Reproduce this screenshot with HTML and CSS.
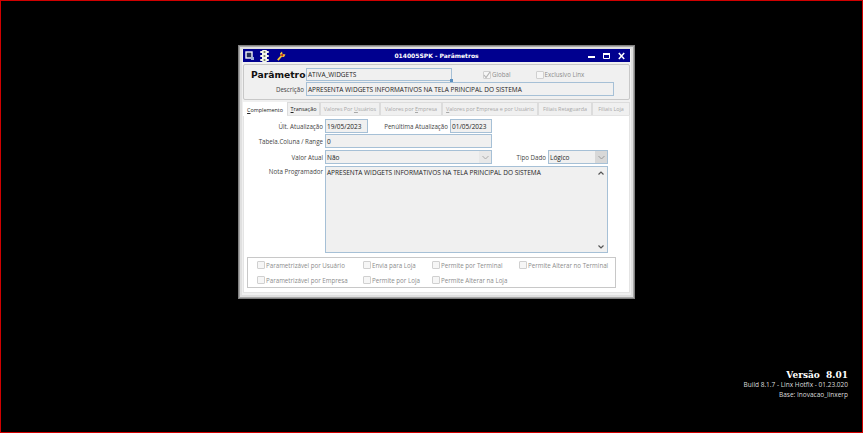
FILE: index.html
```html
<!DOCTYPE html>
<html lang="pt">
<head>
    <meta charset="UTF-8">
    <title>Parâmetros</title>
    <link rel="stylesheet" href="styles.css">
</head>
<body>

<div class="desktop">
    <div class="window">
        <div class="titlebar">
            <div class="title-icons">
                <svg width="9" height="9" viewBox="0 0 9 9"><rect x="1" y="1" width="6" height="6" fill="#26305a" stroke="#f2f4fa" stroke-width="1.4"/><rect x="6" y="6" width="3" height="3" fill="#9fb0d8"/></svg>
                <svg width="9" height="12" viewBox="0 0 9 12"><rect x="2" y="0" width="5" height="12" rx="1" fill="#f2f5ea"/><rect x="0" y="1" width="9" height="2" rx="1" fill="#f2f5ea"/><rect x="0" y="5" width="9" height="2" rx="1" fill="#f2f5ea"/><rect x="0" y="9" width="9" height="2" rx="1" fill="#f2f5ea"/><circle cx="4.5" cy="2" r="1.1" fill="#6d7a60"/><circle cx="4.5" cy="6" r="1.1" fill="#6d7a60"/><circle cx="4.5" cy="10" r="1.1" fill="#6d7a60"/></svg>
                <svg class="wrench" width="9" height="10" viewBox="0 0 9 10"><path d="M0.8 9.2 L4.4 5" stroke="#f2c230" stroke-width="1.8"/><path d="M3 2.5 L5 0.5 L5.5 3 L8.5 3.5 L7 6 L4 5.5 Z" fill="#f6cc35"/><rect x="4.2" y="3" width="2" height="2" fill="#c8281e"/></svg>
            </div>
            <div class="title-text">014005SPK - Parâmetros</div>
            <div class="title-buttons">
                <svg width="7" height="8" viewBox="0 0 7 8"><rect x="0" y="4" width="7" height="2" fill="#fff"/></svg>
                <svg width="7" height="8" viewBox="0 0 7 8"><path d="M0.5 1.5 H6.5 V6.5 H0.5 Z" fill="none" stroke="#fff"/><rect x="0" y="1" width="7" height="2" fill="#fff"/></svg>
                <svg width="7" height="8" viewBox="0 0 7 8"><path d="M0.8 1 L6.2 7 M6.2 1 L0.8 7" stroke="#fff" stroke-width="1.5"/></svg>
            </div>
        </div>

        <div class="header-box">
            <div class="header-row">
                <span class="param-label">Parâmetro</span>
                <div class="field param-name">ATIVA_WIDGETS<i class="resize-dot"></i></div>
                <label class="check check-global"><span class="box"><svg width="8" height="8" viewBox="0 0 8 8"><path d="M1 4 L3 6.5 L7 1" fill="none" stroke="#b4b4b4" stroke-width="1.2"/></svg></span>Global</label>
                <label class="check check-linx"><span class="box"></span>Exclusivo Linx</label>
            </div>
            <div class="desc-row">
                <span class="small-label">Descrição</span>
                <div class="field desc-field">APRESENTA WIDGETS INFORMATIVOS NA TELA PRINCIPAL DO SISTEMA</div>
            </div>
        </div>

        <div class="tabs">
            <div class="tab active"><u>C</u>omplemento</div>
            <div class="tab dark"><u>T</u>ransação</div>
            <div class="tab w-usuario">Valores Por <u>U</u>suários</div>
            <div class="tab w-empresa">Valores por <u>E</u>mpresa</div>
            <div class="tab w-ambos"><u>V</u>alores por Empresa e por Usuário</div>
            <div class="tab w-retag">Filiais Retaguarda</div>
            <div class="tab w-loja">Filiais Loja</div>
        </div>

        <div class="panel">
            <div class="form-row">
                <span class="form-label">Últ. Atualização</span>
                <div class="field date-field">19/05/2023</div>
                <span class="penult-label">Penúltima Atualização</span>
                <div class="field date-field second">01/05/2023</div>
            </div>
            <div class="form-row range">
                <span class="form-label">Tabela.Coluna / Range</span>
                <div class="field range-field">0</div>
            </div>
            <div class="form-row valor">
                <span class="form-label">Valor Atual</span>
                <div class="field select-field valor-field">Não<span class="arrow"><svg width="7" height="5" viewBox="0 0 7 5"><path d="M0.5 1 L3.5 4 L6.5 1" fill="none" stroke="#aaa"/></svg></span></div>
                <span class="tipo-label">Tipo Dado</span>
                <div class="field select-field tipo-field">Lógico<span class="arrow darker"><svg width="7" height="5" viewBox="0 0 7 5"><path d="M0.5 1 L3.5 4 L6.5 1" fill="none" stroke="#999"/></svg></span></div>
            </div>
            <div class="form-row nota">
                <span class="form-label">Nota Programador</span>
                <div class="field memo-field">
                    <span>APRESENTA WIDGETS INFORMATIVOS NA TELA PRINCIPAL DO SISTEMA</span>
                    <div class="scrollbar">
                        <svg width="6" height="4" viewBox="0 0 6 4"><path d="M0.5 3.5 L3 1 L5.5 3.5" fill="none" stroke="#555" stroke-width="1.2"/></svg>
                        <svg width="6" height="4" viewBox="0 0 6 4"><path d="M0.5 0.5 L3 3 L5.5 0.5" fill="none" stroke="#555" stroke-width="1.2"/></svg>
                    </div>
                </div>
            </div>
            <div class="options">
                <label class="check"><span class="box"></span>Parametrizável por Usuário</label>
                <label class="check"><span class="box"></span>Envia para Loja</label>
                <label class="check"><span class="box"></span>Permite por Terminal</label>
                <label class="check"><span class="box"></span>Permite Alterar no Terminal</label>
                <label class="check"><span class="box"></span>Parametrizável por Empresa</label>
                <label class="check"><span class="box"></span>Permite por Loja</label>
                <label class="check"><span class="box"></span>Permite Alterar na Loja</label>
            </div>
        </div>
    </div>

    <div class="version">
        <div class="version-num">Versão&nbsp; 8.01</div>
        <div class="version-line">Build 8.1.7 - Linx Hotfix - 01.23.020</div>
        <div class="version-line base">Base: Inovacao_linxerp</div>
    </div>
</div>

</body>
</html>
```

FILE: styles.css
```css
* {
    box-sizing: border-box;
}

html, body {
    margin: 0;
    height: 100%;
    overflow: hidden;
}

body {
    font-family: 'Open Sans', sans-serif;
    background-color: #000;
}

.desktop {
    position: relative;
    width: 863px;
    height: 433px;
    background-color: #000;
    border: 1px solid #d00000;
}

/* window */
.window {
    position: absolute;
    left: 237px;
    top: 44px;
    width: 397px;
    height: 254px;
    background-color: #f0f0f0;
    border: 1px solid #808080;
    box-shadow: inset 0 0 0 1px #a8a8a8, inset 0 0 0 3px #e0e0e0;
    padding: 3px 4px 5px;
    display: flex;
    flex-direction: column;
}

.titlebar {
    height: 13px;
    background-color: #00008f;
    color: #fff;
    display: flex;
    align-items: center;
    position: relative;
    flex-shrink: 0;
}

.title-icons {
    display: flex;
    align-items: center;
    gap: 6px;
    padding-left: 2px;
}

.wrench {
    margin-left: 2px;
}

.title-text {
    position: absolute;
    left: 0;
    right: 0;
    text-align: center;
    font-family: 'DejaVu Sans', sans-serif;
    font-weight: 700;
    font-size: 6px;
}

.title-buttons {
    margin-left: auto;
    display: flex;
    gap: 8px;
    padding-right: 5px;
}

/* top box */
.header-box {
    height: 36px;
    margin-top: 2px;
    border: 1px solid #c8c8c8;
    border-radius: 2px;
    padding: 3px 0 0 7px;
    flex-shrink: 0;
}

.header-row {
    display: flex;
    align-items: center;
    height: 13px;
}

.param-label {
    font-family: 'DejaVu Sans', sans-serif;
    font-weight: 700;
    font-size: 9.2px;
    color: #111;
    width: 55px;
    white-space: nowrap;
}

.field {
    background-color: #f0f0f0;
    border: 1px solid #a6c0d6;
    font-size: 6.5px;
    color: #222;
    display: flex;
    align-items: center;
    padding-left: 1px;
    white-space: nowrap;
}

.param-name {
    width: 146px;
    height: 13px;
    position: relative;
}

.resize-dot {
    position: absolute;
    right: -2px;
    bottom: -2px;
    width: 3px;
    height: 3px;
    background-color: #5a8fc0;
}

.check {
    font-size: 6.2px;
    color: #8c8c8c;
    display: flex;
    align-items: center;
    gap: 1px;
    white-space: nowrap;
}

.box {
    width: 8px;
    height: 8px;
    border: 1px solid #d0d0d0;
    background-color: #f6f6f6;
    border-radius: 1px;
    flex-shrink: 0;
}

.box svg {
    display: block;
    margin: -1px;
}

.check-global {
    margin-left: 31px;
}

.check-linx {
    margin-left: 25px;
}

.desc-row {
    display: flex;
    align-items: center;
    margin-top: 1px;
    height: 14px;
}

.small-label {
    font-size: 6.2px;
    color: #444;
    width: 53px;
    margin-right: 2px;
    text-align: right;
}

.desc-field {
    width: 308px;
    height: 14px;
}

/* tabs */
.tabs {
    display: flex;
    height: 13px;
    margin-top: 2px;
    flex-shrink: 0;
    font-size: 5.4px;
}

.tab {
    border: 1px solid #dcdcdc;
    border-bottom: none;
    color: #a8a8a8;
    display: flex;
    align-items: center;
    justify-content: center;
    white-space: pre;
    background-color: #f0f0f0;
}

.tab.active {
    width: 44px;
    background-color: #fff;
    color: #222;
    height: 14px;
    border-color: #fff;
    position: relative;
    z-index: 1;
}

.tab.dark {
    width: 33px;
    color: #222;
}

.w-usuario { width: 60px; }
.w-empresa { width: 62px; }
.w-ambos { width: 96px; }
.w-retag { width: 54px; }
.w-loja { width: 38px; }

/* form */
.panel {
    flex: 1;
    background-color: #fff;
    border: 1px solid #e4e4e4;
    padding-top: 3px;
    font-size: 6.2px;
    color: #444;
}

.form-row {
    display: flex;
    align-items: center;
    height: 14px;
}

.form-label {
    width: 79px;
    text-align: right;
    margin-right: 2px;
    white-space: nowrap;
}

.date-field {
    width: 43px;
    height: 14px;
}

.date-field.second {
    width: 42px;
}

.penult-label {
    width: 80px;
    text-align: right;
    margin-right: 2px;
    white-space: nowrap;
}

.range {
    margin-top: 1px;
}

.range-field {
    width: 167px;
    height: 14px;
}

.valor {
    margin-top: 2px;
}

.select-field {
    position: relative;
    height: 14px;
}

.valor-field {
    width: 167px;
}

.tipo-label {
    width: 54px;
    text-align: right;
    margin-right: 2px;
    white-space: nowrap;
}

.tipo-field {
    width: 60px;
}

.arrow {
    position: absolute;
    right: 0;
    top: 0;
    bottom: 0;
    width: 12px;
    background-color: #e8e8e8;
    display: flex;
    align-items: center;
    justify-content: center;
}

.arrow.darker {
    background-color: #d8d8d8;
}

.nota {
    align-items: flex-start;
    margin-top: 2px;
    height: 87px;
}

.nota .form-label {
    margin-top: 1px;
}

.memo-field {
    width: 283px;
    height: 87px;
    position: relative;
    align-items: flex-start;
    padding-top: 1px;
}

.scrollbar {
    position: absolute;
    right: 0;
    top: 0;
    bottom: 0;
    width: 12px;
    display: flex;
    flex-direction: column;
    justify-content: space-between;
    align-items: center;
    padding: 4px 0 3px;
}

.options {
    margin: 4px 0 0 3px;
    width: 369px;
    height: 31px;
    border: 1px solid #c8c8c8;
    display: grid;
    grid-template-columns: 106px 69px 87px auto;
    grid-template-rows: 15px 15px;
    padding-left: 9px;
    align-content: center;
}

/* version */
.version {
    position: absolute;
    right: 14px;
    top: 369px;
    text-align: right;
    color: #dcdcdc;
    font-size: 6.5px;
}

.version-num {
    font-family: 'DejaVu Serif', serif;
    font-weight: 700;
    font-size: 9px;
    color: #fff;
    line-height: 11px;
}

.version-line {
    line-height: 8px;
}

.base {
    margin-top: 2px;
}
```
